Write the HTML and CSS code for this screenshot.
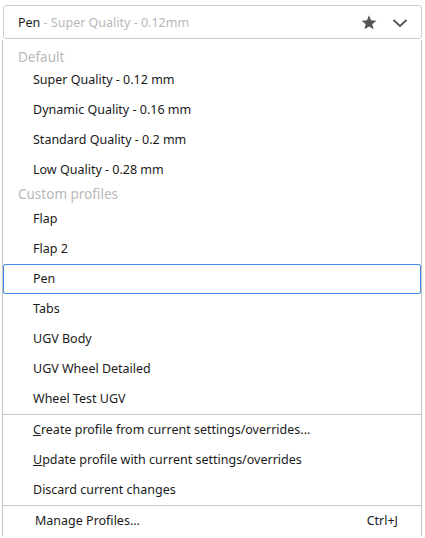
FILE: index.html
```html
<!DOCTYPE html>
<html>
<head>
<meta charset="utf-8">
<link rel="stylesheet" href="styles.css">
</head>
<body>
<div class="page">
  <div class="combo">
    <span class="combo-text"><span class="current">Pen</span><span class="sub"> - Super Quality - 0.12mm</span></span>
    <svg class="star" width="16" height="15" viewBox="0 0 24 23"><path d="M12 0.5l3.1 7.6 8.2 0.6-6.3 5.3 2 8-7-4.4-7 4.4 2-8L0.7 8.7l8.2-0.6z" fill="#555"/></svg>
    <svg class="chev" width="16" height="10" viewBox="0 0 16 10"><path d="M1.5 2l6.5 6 6.5-6" fill="none" stroke="#555" stroke-width="1.8"/></svg>
  </div>
  <div class="menu">
    <div class="header first">Default</div>
    <div class="item">Super Quality - 0.12 mm</div>
    <div class="item">Dynamic Quality - 0.16 mm</div>
    <div class="item">Standard Quality - 0.2 mm</div>
    <div class="item">Low Quality - 0.28 mm</div>
    <div class="header">Custom profiles</div>
    <div class="item">Flap</div>
    <div class="item">Flap 2</div>
    <div class="item selected">Pen</div>
    <div class="item">Tabs</div>
    <div class="item">UGV Body</div>
    <div class="item">UGV Wheel Detailed</div>
    <div class="item">Wheel Test UGV</div>
    <div class="sep"></div>
    <div class="item"><u>C</u>reate profile from current settings/overrides...</div>
    <div class="item"><u>U</u>pdate profile with current settings/overrides</div>
    <div class="item">Discard current changes</div>
    <div class="sep"></div>
    <div class="item manage"><span>Manage Profiles...</span><span class="shortcut">Ctrl+J</span></div>
  </div>
</div>
</body>
</html>
```
FILE: styles.css
```css
html, body {
  margin: 0;
  padding: 0;
  background: #ffffff;
  height: 538px;
  overflow: hidden;
}
*, *::before, *::after { box-sizing: border-box; }
body {
  font-family: "Noto Sans", "DejaVu Sans", sans-serif;
  color: #1a1a1a;
}
.page {
  padding: 5px 3px 0 2px;
}
.combo {
  display: flex;
  align-items: center;
  height: 34px;
  margin-left: 1px;
  border: 1px solid #cdcdcd;
  border-radius: 3px;
  padding: 0 13px 0 14px;
}
.combo-text {
  flex: 1;
  font-size: 12.5px;
  padding-top: 1px;
}
.current { color: #1a1a1a; }
.sub { color: #b8b8b8; }
.star { margin-right: 15px; }
.chev { margin-top: 1px; }
.menu {
  border-left: 1px solid #c4c4c4;
  border-right: 1px solid #c4c4c4;
  margin-top: 1px;
  padding-top: 1px;
}
.header {
  font-size: 13.5px;
  color: #b8b8b8;
  padding-left: 15px;
  height: 19px;
  line-height: 18px;
}
.header.first { height: 24px; line-height: 18px; padding-top: 7px; }
.item {
  height: 30px;
  line-height: 28px;
  font-size: 12.5px;
  padding-left: 29px;
  border: 1px solid transparent;
  border-radius: 2px;
}
.item.selected {
  border-color: #3d8ce6;
}
.item u { text-decoration: underline; }
.sep {
  height: 1px;
  background: #cccccc;
}
.manage {
  display: flex;
  padding-left: 31px;
  padding-right: 22px;
}
.manage span:first-child { flex: 1; }
```
